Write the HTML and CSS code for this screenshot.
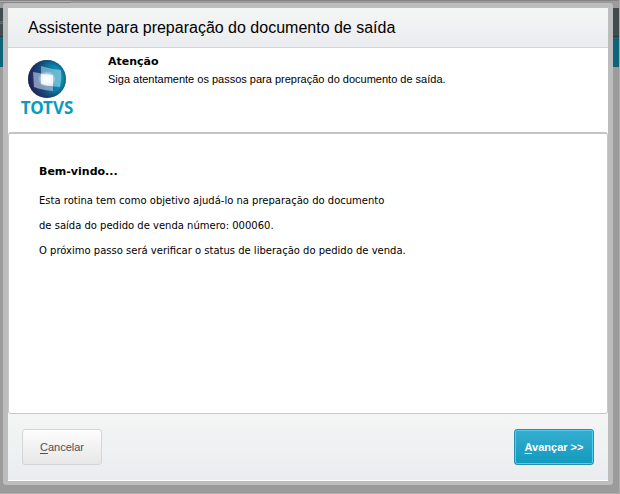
FILE: index.html
```html
<!DOCTYPE html>
<html lang="pt-BR">
  <head>
    <meta charset="UTF-8" />
    <meta name="viewport" content="width=device-width, initial-scale=1.0" />
    <title>Assistente para preparação do documento de saída</title>
    <link rel="stylesheet" href="styles.css">
  </head>
  <body>
    <div class="app-tabs"><div class="app-tab"></div></div>
    <div class="app-header">c</div>
    <div class="app-menu"></div>

    <div class="overlay">
      <main class="dialog">
        <header class="dialog-title">
          <h1>Assistente para preparação do documento de saída</h1>
        </header>

        <section class="intro">
          <svg class="logo" width="56" height="60" viewBox="0 0 56 60" role="img" aria-label="TOTVS">
            <defs>
              <linearGradient id="globe" x1="0" y1="0.6" x2="1" y2="0.4">
                <stop offset="0" stop-color="#292258" />
                <stop offset="0.4" stop-color="#174c7d" />
                <stop offset="0.75" stop-color="#078eb2" />
                <stop offset="1" stop-color="#12a3c0" />
              </linearGradient>
              <radialGradient id="shade">
                <stop offset="0.75" stop-color="#16214f" stop-opacity="0" />
                <stop offset="1" stop-color="#16214f" stop-opacity="0.5" />
              </radialGradient>
              <radialGradient id="glow">
                <stop offset="0" stop-color="#fff" />
                <stop offset="0.5" stop-color="#fff" stop-opacity="0.7" />
                <stop offset="1" stop-color="#fff" stop-opacity="0" />
              </radialGradient>
            </defs>
            <circle cx="27" cy="21" r="19" fill="url(#globe)" />
            <circle cx="27" cy="21" r="19" fill="url(#shade)" />
            <path d="M21 8 Q30 11 41 12 Q42 20 40 29 Q30 29 21 26 Z" fill="#a9d6ea" fill-opacity="0.6" />
            <path d="M13 14 Q23 16 33 17 L33 33 Q22 32 14 29 Z" fill="#b9c8e2" fill-opacity="0.65" />
            <path d="M21 16 Q27 17 33 17 L33 28 Q26 28 21 26 Z" fill="#fff" fill-opacity="0.7" />
            <ellipse cx="27" cy="21" rx="9" ry="8" fill="url(#glow)" />
            <text class="logo-text" x="27" y="56" text-anchor="middle">TOTVS</text>
          </svg>
          <div class="intro-text">
            <h2>Atenção</h2>
            <p>Siga atentamente os passos para prepração do documento de saída.</p>
          </div>
        </section>

        <section class="content">
          <h2>Bem-vindo...</h2>
          <p>
            Esta rotina tem como objetivo ajudá-lo na preparação do documento<br />
            de saída do pedido de venda número: 000060.<br />
            O próximo passo será verificar o status de liberação do pedido de venda.
          </p>
        </section>

        <footer class="actions">
          <button type="button" class="btn" accesskey="c"><u>C</u>ancelar</button>
          <button type="button" class="btn btn-primary" accesskey="a"><u>A</u>vançar &gt;&gt;</button>
        </footer>
      </main>
    </div>
  </body>
</html>
```
FILE: styles.css
```css
* {
  box-sizing: border-box;
}
body {
  margin: 0;
  min-height: 100vh;
  background-color: #9b9b9b;
  border-right: 1px solid #adadad;
  border-bottom: 1px solid #adadad;
  font-family: "Liberation Sans", Arial, sans-serif;
  font-size: 11px;
  color: #000;
}
h1,
h2,
p {
  margin: 0;
}
.app-tabs {
  height: 8px;
  border-top: 1px solid #858585;
}
.app-tab {
  width: 71px;
  height: 2px;
  background-color: #b0b0b0;
  border-bottom: 1px solid #858585;
}
.app-header {
  height: 29px;
  background-color: #424b4d;
  border-bottom: 1px solid #303536;
  color: #8d9294;
  font-size: 6px;
  line-height: 29px;
}
.app-menu {
  height: 30px;
  background-color: #0e6478;
}
.overlay {
  position: absolute;
  inset: 0;
  display: flex;
  padding: 3px 7px 9px 3px;
}
.dialog {
  flex: 1;
  display: flex;
  flex-direction: column;
  border: 5px solid #bdbdbd;
  border-bottom-width: 4px;
  border-radius: 3px;
  background-color: #fff;
}
.dialog-title {
  height: 40px;
  padding: 0 20px;
  background: linear-gradient(#f4f6f5, #ebecef);
  border-bottom: 1px solid #d3d4d6;
}
.dialog-title h1 {
  font-size: 16px;
  font-weight: normal;
  line-height: 40px;
}
.intro {
  display: flex;
  gap: 32px;
  height: 84px;
  padding: 6px 12px;
}
.logo {
  margin-top: 4px;
  overflow: visible;
}
.logo-text {
  font-family: "Noto Sans", sans-serif;
  font-size: 17px;
  font-weight: bold;
  fill: #089dbf;
}
h2 {
  font-family: "DejaVu Sans", Verdana, sans-serif;
  font-size: 11px;
  line-height: 16px;
}
.intro-text p {
  line-height: 18px;
}
.content {
  flex: 1;
  padding: 30px;
  border: 1px solid #c8c8c8;
  border-top: 2px solid #c4c4c4;
  border-radius: 3px;
}
.content p {
  margin-top: 8px;
  font-family: "DejaVu Sans", Verdana, sans-serif;
  font-size: 10px;
  line-height: 25px;
}
.actions {
  display: flex;
  justify-content: space-between;
  padding: 15px 14px;
  background: linear-gradient(#f4f6f5, #ebecef);
  border-bottom: 1px solid #fff;
}
.btn {
  width: 80px;
  height: 36px;
  padding: 0;
  border: 1px solid #d3d5d6;
  border-radius: 3px;
  background: linear-gradient(#fdfdfd, #e7e7e7);
  color: #4b4f5e;
  font-family: inherit;
  font-size: 11px;
  cursor: pointer;
}
.btn-primary {
  border-color: #2391ae;
  background: linear-gradient(#35add0, #129abd);
  box-shadow: inset 0 0 0 1px #4fd0f2;
  color: #fff;
  font-weight: bold;
}
.btn u {
  text-underline-offset: 2px;
}
```
